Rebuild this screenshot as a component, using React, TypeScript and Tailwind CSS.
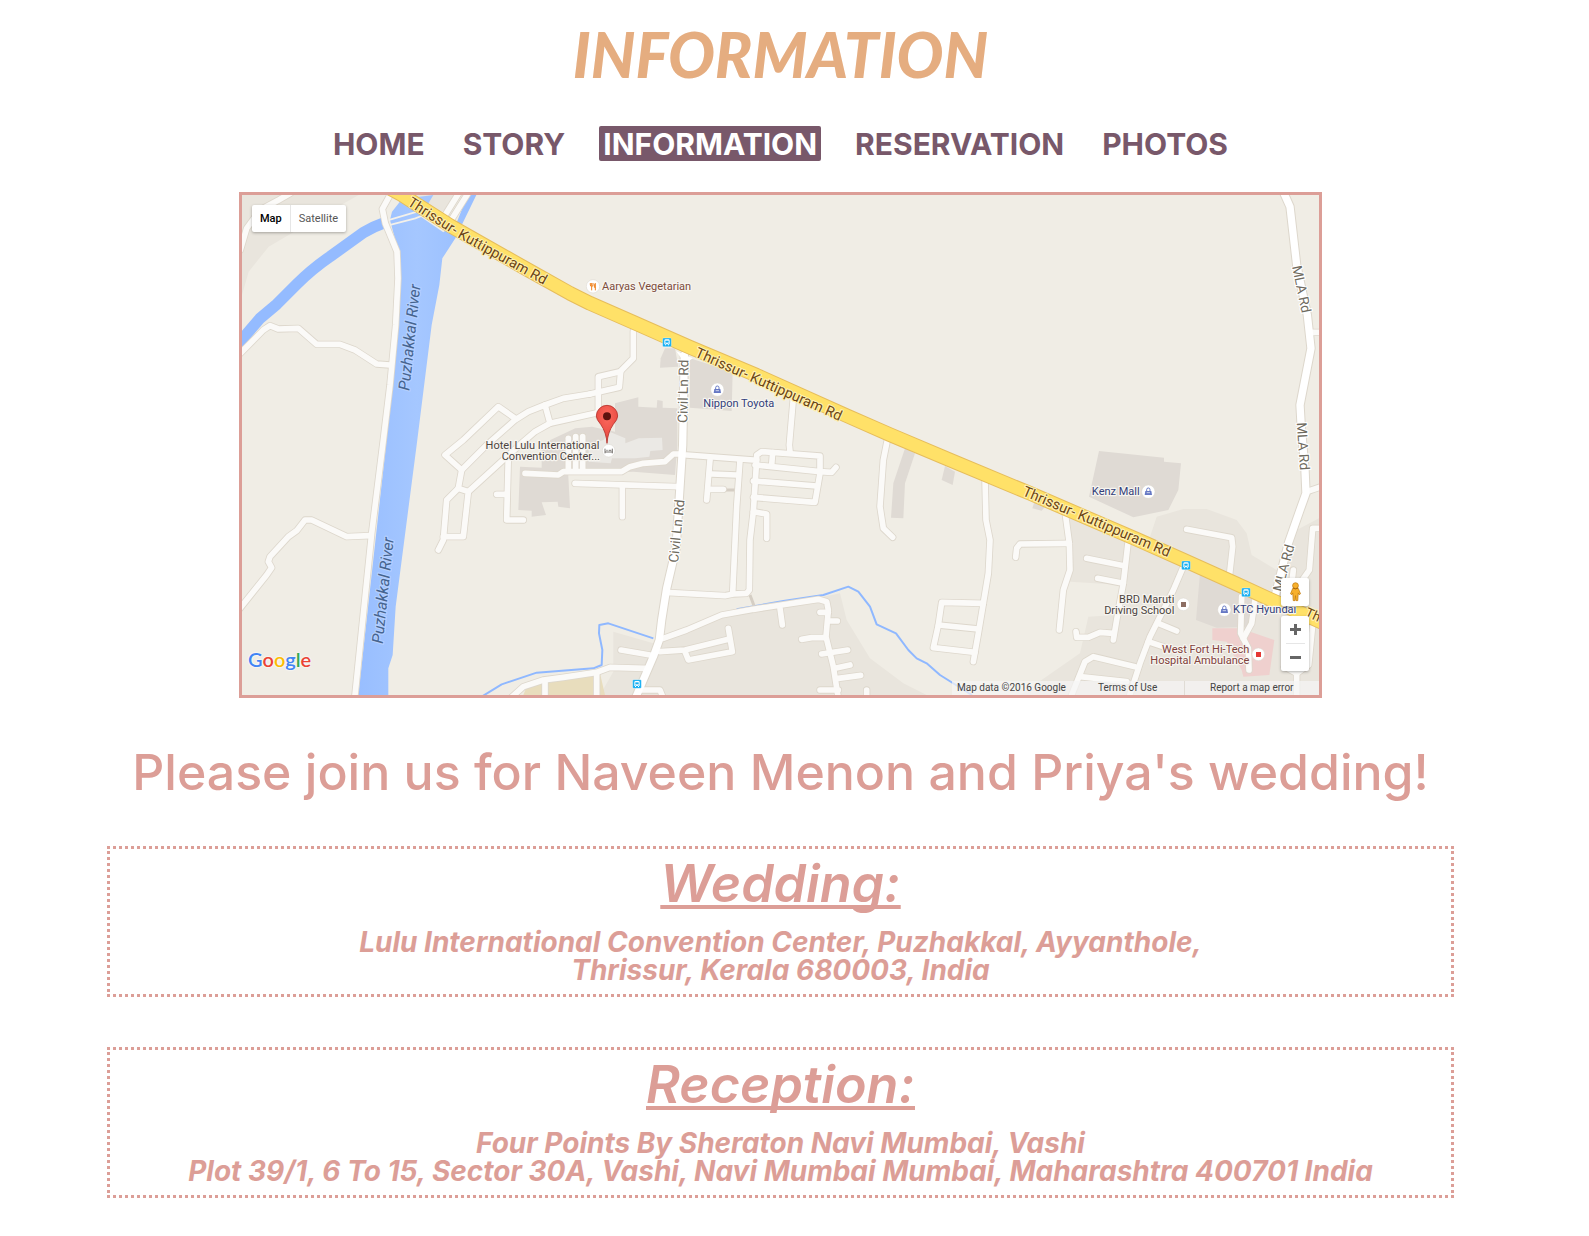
import React from 'react';

const ROADS: string[] = [
  'M-5,165 L14,100 L54,45 L110,15 L145,-5',
  'M-10,480 L64,405 L84,392 L109,402 L169,400 L224,448 L294,448 L339,465 L404,507 L444,510',
  'M-10,1245 L74,1140 L89,1118 L79,1100 L84,1085 L139,1025 L164,1007 L189,975 L209,975 L314,1025 L384,1022',
  'M447,-5 L421,42 L430,85 L465,170 L468,250 L461,390 L444,570 L424,735 L389,1015 L339,1500',
  'M600,75 L650,-5',
  'M622,84 L678,-5',
  'M819,670 L769,635 L664,735 L609,780 L659,825',
  'M1044,597 L964,610 L909,630 L859,650 L819,675 L734,750 L659,825 L649,880 L679,890 L664,1025 L604,1025',
  'M649,880 L614,915 L604,1035 L589,1065',
  'M1090,648 L924,685 L879,710 L844,740 L679,890',
  'M909,630 L924,685',
  'M1069,660 L1069,545 L1134,530 L1174,490 L1174,410',
  'M1136,530 L1132,577 L1044,597',
  'M799,780 L794,975 L844,975',
  'M764,898 L794,898',
  'M849,835 L949,840 L964,830 L1139,830 L1164,815 L1204,805 L1269,800 L1294,777 L1319,777',
  'M999,865 L1309,875',
  'M1141,875 L1141,965',
  'M979,730 V828',
  'M1001,725 V828',
  'M1022,725 V828',
  'M1334,780 L1534,795',
  'M1404,795 L1394,915',
  'M1409,837 L1484,840',
  'M1404,883 L1444,883',
  'M1494,795 L1484,935 L1472,1195',
  'M1544,795 L1544,780 L1559,770 L1734,783 L1734,835 L1719,922 L1534,907',
  'M1539,810 L1734,830 L1769,832 L1782,817',
  'M1592,773 L1589,810',
  'M1534,858 L1724,873',
  'M1544,795 L1534,950 L1524,1035 L1522,1185 L1514,1195 L1474,1197 L1449,1202 L1284,1193',
  'M1534,950 L1574,957 L1574,1030',
  'M1654,610 L1642,750 L1644,770',
  'M1936,735 L1924,795 L1914,935 L1924,1000 L1952,1027',
  'M1264,1330 L1334,1305 L1439,1260 L1534,1243 L1729,1213 L1754,1220 L1759,1245 L1752,1325 L1774,1415 L1789,1510',
  'M1614,1240 L1621,1290',
  'M1734,1252 L1759,1252',
  'M1759,1278 L1786,1278',
  'M1679,1333 L1709,1328 L1749,1328',
  'M1739,1377 L1817,1365',
  'M1779,1420 L1824,1410',
  'M1789,1450 L1856,1441',
  'M1734,1485 L1789,1485',
  'M1874,1485 L1874,1510',
  'M1137,1365 L1224,1380',
  'M1254,1370 L1329,1365 L1459,1333',
  'M1459,1300 L1471,1370 L1339,1395 L1329,1370',
  'M1209,1420 L1104,1417 L1064,1432 L964,1447 L904,1455 L844,1475 L805,1510',
  'M909,1460 V1510',
  'M1064,1435 V1510',
  'M1194,1485 L1254,1485 L1264,1510',
  'M2224,1225 L2099,1222 L2089,1290 L2074,1358 L2199,1372',
  'M2089,1290 L2209,1302',
  'M2229,850 L2232,975 L2244,1035 L2239,1135 L2224,1225 L2209,1315 L2194,1400',
  'M2469,950 L2482,1045 L2484,1125 L2464,1185 L2452,1305',
  'M2482,1045 L2334,1047 L2324,1060 L2321,1087',
  'M2659,1035 L2644,1165 L2624,1275 L2614,1335',
  'M2534,1090 L2649,1113',
  'M2567,1150 L2644,1165',
  'M2614,1315 L2574,1312 L2539,1327 L2504,1327 L2502,1310',
  'M2824,1115 L2794,1185 L2724,1325 L2694,1405 L2660,1510',
  'M2749,1285 L2804,1308',
  'M2719,1340 L2764,1355',
  'M2679,1415 L2554,1385 L2529,1400 L2485,1510',
  'M2514,1445 L2654,1460',
  'M2834,1003 L2969,1028 L2972,1055 L2962,1145',
  'M2999,1205 L2996,1315 L3019,1360 L3021,1425',
  'M3039,1215 L3029,1285 L3004,1330',
  'M3212,412 L3240,412',
  'M3194,890 L3240,874',
  'M3240,1000 L3212,1000 L3202,1125 L3174,1165',
  'M3154,1125 L3150,1160',
  'M3212,1290 L3200,1410 L3164,1435 L3127,1415',
  'M3164,1435 V1510',
];

const STREETS: string[] = [
  'M1327,480 L1322,750 L1314,875 L1302,1060 L1274,1180 L1259,1275 L1252,1335 L1234,1385 L1180,1510',
  'M3126,-5 L3144,35 L3164,210 L3196,360 L3207,460 L3174,630 L3178,700 L3189,825 L3192,895 L3174,945 L3139,1045 L3099,1205',
];

const HIGHWAY =
  'M440,-22 L474,-4 L624,92 L864,228 L984,295 L1044,325 L1174,382 L1344,457 L1544,541 L1814,662 L1944,719 L2124,795 L2364,895 L2684,1033 L2824,1095 L2984,1167 L3084,1213 L3240,1282';

const BUILDINGS: string[] = [
  '834,815 899,818 899,760 979,740 979,845 984,940 949,935 947,920 899,922 912,960 869,965 869,947 829,945',
  '1119,625 1189,607 1189,635 1244,638 1246,615 1262,618 1262,638 1306,640 1306,750 1299,840 1174,830 1044,835 900,830 914,740 1000,700 1050,695 1119,710',
  '1269,460 1299,460 1309,515 1254,518 1256,490',
  '1344,490 1472,530 1469,648 1344,638',
  '2571,768 2766,788 2766,800 2817,805 2809,885 2779,945 2674,967 2541,905',
  '1989,760 2019,775 1989,865 1984,970 1947,968 1954,865',
  '2109,813 2139,830 2132,870 2099,855',
  '2379,915 2414,930 2399,947 2371,940',
  '2874,1135 2954,1145 3044,1205 3029,1295 2924,1298 2862,1275',
];

type LabelProps = {
  x: number;
  y: number;
  rotate?: number;
  size?: number;
  fill: string;
  halo?: string;
  italic?: boolean;
  anchor?: 'start' | 'end';
  children: React.ReactNode;
};

function Label({ x, y, rotate = 0, size = 33, fill, halo = '#f7f5f0', italic, anchor = 'start', children }: LabelProps) {
  return (
    <text
      transform={`translate(${x} ${y}) rotate(${rotate})`}
      fontSize={size}
      fill={fill}
      stroke={halo}
      strokeWidth={7}
      strokeLinejoin="round"
      paintOrder="stroke"
      textAnchor={anchor}
      fontStyle={italic ? 'italic' : 'normal'}
    >
      {children}
    </text>
  );
}

function BusStop({ x, y }: { x: number; y: number }) {
  return (
    <g transform={`translate(${x} ${y})`}>
      <rect x="-13" y="-13" width="26" height="26" rx="3" fill="#12aef2" stroke="#fff" strokeWidth="1" />
      <path d="M-8,-5 Q-8,-9 -4,-9 H4 Q8,-9 8,-5 V6 H6 V9 H3 V6 H-3 V9 H-6 V6 H-8 Z" fill="#fff" />
      <rect x="-5" y="-5" width="10" height="6" fill="#12aef2" />
      <circle cx="-4" cy="4" r="1.5" fill="#12aef2" />
      <circle cx="4" cy="4" r="1.5" fill="#12aef2" />
    </g>
  );
}

function Shop({ x, y }: { x: number; y: number }) {
  return (
    <g transform={`translate(${x} ${y})`}>
      <circle r="20" fill="#fff" stroke="#d8d4cc" strokeWidth="1.5" />
      <path d="M-5,-2 V-6 Q-5,-11 0,-11 Q5,-11 5,-6 V-2" fill="none" stroke="#6678c4" strokeWidth="3" />
      <path d="M-9,-2 H9 L11,10 H-11 Z" fill="#6678c4" />
      <path d="M-5,3 H5" stroke="#fff" strokeWidth="2" />
    </g>
  );
}

function MapDrawing() {
  const road = '#fbfaf8';
  const casing = '#ddd7cc';
  const building = '#dfdad4';
  return (
    <svg
      viewBox="0 0 3231 1500"
      preserveAspectRatio="xMidYMid slice"
      className="block h-full w-full font-[Roboto,sans-serif]"
      role="img"
      aria-label="Map of Puzhakkal, Thrissur"
    >
      <defs>
        <radialGradient id="pin" cx="0.5" cy="0.3" r="0.7">
          <stop offset="0" stopColor="#fb6a5e" />
          <stop offset="1" stopColor="#e5423a" />
        </radialGradient>
        <linearGradient id="water" x1="0" x2="1">
          <stop offset="0" stopColor="#98beff" />
          <stop offset="0.5" stopColor="#a5c7ff" />
          <stop offset="1" stopColor="#98beff" />
        </linearGradient>
        <path id="highway-label" d="M494,29 L648,128 L1010,328" />
      </defs>
      <rect width="3231" height="1500" fill="#f0ede5" />
      <g fill="#e9e5dd">
        <path d="M0,0 H350 L200,85 L80,155 L20,230 L0,300 Z" />
        <path d="M480,0 H650 L600,50 L470,30 Z" />
        <path d="M1114,1310 L1234,1345 L1439,1265 L1744,1205 L1794,1195 L1814,1275 L1884,1390 L1984,1465 L2054,1500 H1074 L1114,1430 Z" />
        <path d="M2474,960 L2650,1020 L2724,1025 L2744,965 L2824,942 L2894,942 L2984,975 L3014,1015 L3029,1080 L3104,1125 L3164,1005 L3231,970 V1500 H2334 L2514,1375 L2539,1265 L2620,1260 L2644,1170 L2484,1160 Z" />
      </g>
      <path d="M844,1500 L854,1475 L1074,1435 L1089,1500 Z" fill="#e8ddbd" />
      <g fill={building}>
        {BUILDINGS.map((points) => (
          <polygon key={points} points={points} />
        ))}
      </g>
      <path
        d="M1106,712 L1150,730 L1150,745 L1190,730 L1260,728 L1262,765 L1225,768 L1222,785 L1180,790 L1110,790 L1106,805 L1040,800 L1040,750 L1084,735 Z"
        fill="#ebe9e5"
      />
      <path
        d="M2911,1300 L2994,1300 L3097,1335 L3082,1440 L3004,1445 L2999,1425 L2954,1340 L2911,1335 Z"
        fill="#efd0ce"
      />
      <path
        d="M574,0 L480,12 L450,50 L444,75 L464,150 L476,240 L469,370 L444,570 L432,750 L349,1500 H439 V1420 L452,1380 L461,1235 L524,750 L569,390 L592,270 L601,190 L640,130 L703,0 H677 L645,80 L604,112 L536,65 Z"
        fill="url(#water)"
      />
      <g fill="none" stroke="#8fb8ff" strokeLinejoin="round">
        <path
          d="M-10,445 L54,370 L104,328 L164,268 Q210,222 264,185 L364,113 Q395,94 430,82"
          strokeWidth="34"
          stroke="#94bbff"
        />
        <path
          d="M719,1505 L779,1468 L884,1433 L1054,1420 L1079,1410 L1081,1365 L1071,1315 L1072,1290 L1099,1285 L1234,1330"
          strokeWidth="6"
        />
        <path
          d="M1484,1243 L1624,1218 L1744,1200 L1819,1175 L1849,1190 L1884,1235 L1904,1288 L1962,1315 L1999,1365 L2024,1390 L2054,1405 L2094,1440 L2190,1500"
          strokeWidth="6"
        />
      </g>
      <g fill="none" stroke="#f4f1ea" strokeWidth="5">
        <path d="M424,80 L518,52 L560,45" />
        <path d="M424,95 L520,70 L540,62" />
      </g>
      <path d="M1448,885 H1478 M1524,1200 L1536,1232" stroke="#d5cec4" strokeWidth="9" />
      <g fill="none" strokeLinecap="round" strokeLinejoin="round">
        <g stroke={casing} strokeWidth="22">
          {ROADS.map((d) => (
            <path key={d} d={d} />
          ))}
        </g>
        <g stroke={casing} strokeWidth="28">
          {STREETS.map((d) => (
            <path key={d} d={d} />
          ))}
        </g>
        <g stroke={road} strokeWidth="17">
          {ROADS.map((d) => (
            <path key={d} d={d} />
          ))}
        </g>
        <g stroke="#fff" strokeWidth="22">
          {STREETS.map((d) => (
            <path key={d} d={d} />
          ))}
        </g>
        <path d="M1302,468 L1352,490 L1330,506 Z" fill="#fff" />
        <path d={HIGHWAY} stroke="#e6bd5c" strokeWidth="44" />
        <path d={HIGHWAY} stroke="#ffe168" strokeWidth="38" />
      </g>

      <text
        fontSize="43"
        fill="#6b4413"
        stroke="#fff0b0"
        strokeWidth="6"
        strokeLinejoin="round"
        paintOrder="stroke"
      >
        <textPath href="#highway-label">Thrissur- Kuttippuram Rd</textPath>
      </text>
      <Label x={1357} y={484} rotate={24} size={43} fill="#6b4413" halo="#fff0b0">Thrissur- Kuttippuram Rd</Label>
      <Label x={2339} y={900} rotate={23} size={43} fill="#6b4413" halo="#fff0b0">Thrissur- Kuttippuram Rd</Label>
      <Label x={3187} y={1262} rotate={24} size={40} fill="#6b4413" halo="#fff0b0">Th</Label>
      <Label x={502} y={588} rotate={-84} size={47} fill="#46648f" halo="#b4d0ff" italic>Puzhakkal River</Label>
      <Label x={422} y={1347} rotate={-84} size={47} fill="#46648f" halo="#b4d0ff" italic>Puzhakkal River</Label>
      <Label x={1336} y={684} rotate={-89} size={41} fill="#6f6b60" halo="#fff">Civil Ln Rd</Label>
      <Label x={1308} y={1104} rotate={-84} size={41} fill="#6f6b60" halo="#fff">Civil Ln Rd</Label>
      <Label x={3150} y={215} rotate={78} size={41} fill="#6f6b60" halo="#fff">MLA Rd</Label>
      <Label x={3164} y={683} rotate={86} size={41} fill="#6f6b60" halo="#fff">MLA Rd</Label>
      <Label x={3120} y={1192} rotate={-75} size={41} fill="#6f6b60" halo="#fff">MLA Rd</Label>

      <circle cx="1053" cy="274" r="20" fill="#fff" stroke="#d8d4cc" strokeWidth="1.5" />
      <path
        d="M1045,264 V270 Q1045,274 1049,275 V286 M1049,264 V275 M1053,264 V270 Q1053,274 1049,275 M1060,286 V265 Q1056,267 1057,277 H1060"
        fill="none"
        stroke="#f0821e"
        strokeWidth="3"
      />
      <Label x={1080} y={285} fill="#7d4c3c">Aaryas Vegetarian</Label>
      <Shop x={1426} y={584} />
      <Label x={1384} y={636} fill="#33407a">Nippon Toyota</Label>
      <Shop x={2719} y={890} />
      <Label x={2693} y={899} fill="#33407a" anchor="end">Kenz Mall</Label>
      <Shop x={2947} y={1244} />
      <Label x={2973} y={1255} fill="#33407a">KTC Hyundai</Label>
      <BusStop x={1275} y={442} />
      <BusStop x={1185} y={1467} />
      <BusStop x={2832} y={1111} />
      <BusStop x={3012} y={1192} />

      <circle cx="2824" cy="1228" r="19" fill="#fff" stroke="#d8d4cc" strokeWidth="1.5" />
      <rect x="2817" y="1221" width="15" height="15" fill="#8d6e63" />
      <Label x={2797} y={1224} fill="#4c4440" anchor="end">BRD Maruti</Label>
      <Label x={2797} y={1257} fill="#4c4440" anchor="end">Driving School</Label>
      <circle cx="3049" cy="1378" r="19" fill="#fff" stroke="#d8d4cc" strokeWidth="1.5" />
      <rect x="3042" y="1371" width="15" height="15" fill="#e53935" />
      <Label x={3022} y={1374} fill="#81413c" anchor="end">West Fort Hi-Tech</Label>
      <Label x={3022} y={1407} fill="#81413c" anchor="end">Hospital Ambulance</Label>

      <circle cx="1100" cy="767" r="19" fill="#fff" stroke="#d8d4cc" strokeWidth="1.5" />
      <path d="M1089,761 V775 M1111,761 V775 M1089,771 H1111 M1093,766 H1097 M1100,766 H1108" stroke="#5f5a55" strokeWidth="2.5" />
      <Label x={1072} y={761} fill="#4c4440" anchor="end">Hotel Lulu International</Label>
      <Label x={1074} y={794} fill="#4c4440" anchor="end">Convention Center...</Label>
      <path
        d="M1095,745 Q1093,712 1076,688 Q1063,673 1063,663 A32,32 0 0 1 1127,663 Q1127,673 1114,688 Q1097,712 1095,745 Z"
        fill="url(#pin)"
        stroke="#b5312b"
        strokeWidth="2.5"
      />
      <circle cx="1095" cy="664" r="12" fill="#5c120e" />
    </svg>
  );
}

function Pegman() {
  return (
    <svg viewBox="0 0 14 22" className="h-[20px] w-[13px]" aria-hidden="true">
      <path d="M4,7 H10 L12.5,13 L11,14 L10,12 L9.5,20.5 H7.5 L7,15 L6.5,20.5 H4.5 L4,12 L3,14 L1.5,13 Z" fill="#f7b02c" stroke="#c07a12" strokeWidth="0.8" />
      <circle cx="7" cy="4" r="3.2" fill="#f7b02c" stroke="#c07a12" strokeWidth="0.8" />
      <path d="M4.2,6.6 Q7,8.6 9.8,6.6" fill="none" stroke="#a86208" strokeWidth="1" />
    </svg>
  );
}

function MapPanel() {
  return (
    <section className="relative mx-auto h-[506px] w-full max-w-[1083px] overflow-hidden border-3 border-[#dc9e97] font-[Roboto,sans-serif]">
      <MapDrawing />
      <div className="absolute top-[10px] left-[10px] flex h-[27px] rounded-xs bg-white text-[11px] shadow-[0_1px_3px_rgba(0,0,0,0.3)]">
        <button type="button" className="border-r border-[#e6e6e6] px-2 pt-px font-medium text-black">Map</button>
        <button type="button" className="px-2 pt-px text-[#565656]">Satellite</button>
      </div>
      <button
        type="button"
        aria-label="Street View"
        className="absolute top-[383px] right-[10px] flex size-7 items-center justify-center rounded-xs bg-white shadow-[0_1px_3px_rgba(0,0,0,0.3)]"
      >
        <Pegman />
      </button>
      <div className="absolute top-[421px] right-[10px] flex w-7 flex-col items-center rounded-xs bg-white shadow-[0_1px_3px_rgba(0,0,0,0.3)]">
        <button type="button" aria-label="Zoom in" className="flex h-[27px] w-full items-center justify-center">
          <svg viewBox="0 0 11 11" className="size-[11px]"><path d="M0,5.5 H11 M5.5,0 V11" stroke="#666" strokeWidth="3" /></svg>
        </button>
        <span className="h-px w-[19px] bg-[#e6e6e6]" />
        <button type="button" aria-label="Zoom out" className="flex h-[27px] w-full items-center justify-center">
          <svg viewBox="0 0 11 11" className="size-[11px]"><path d="M0,5.5 H11" stroke="#666" strokeWidth="3" /></svg>
        </button>
      </div>
      <a
        href="#google"
        className="absolute bottom-[22px] left-[6px] font-[Lato,sans-serif] text-[20px] leading-7 font-semibold [text-shadow:0_0_2px_#fff,0_0_2px_#fff]"
      >
        <span className="text-[#4285f4]">G</span>
        <span className="text-[#ea4335]">o</span>
        <span className="text-[#fbbc05]">o</span>
        <span className="text-[#4285f4]">g</span>
        <span className="text-[#34a853]">l</span>
        <span className="text-[#ea4335]">e</span>
      </a>
      <div className="absolute right-0 bottom-0 flex h-[14px] bg-[#f5f5f5]/70 text-[10px] leading-[14px] text-[#444]">
        <span className="w-[127px] pl-[5px] whitespace-nowrap">Map data ©2016 Google</span>
        <a href="#terms" className="w-[106px] border-r border-[#e0dcd5] pl-[19px]">Terms of Use</a>
        <a href="#report" className="w-[134px] pl-[25px]">Report a map error</a>
      </div>
    </section>
  );
}

const NAV = ['HOME', 'STORY', 'INFORMATION', 'RESERVATION', 'PHOTOS'];

function EventCard({ title, lines }: { title: string; lines: string[] }) {
  return (
    <section className="border-3 border-dotted border-[#dc9e97] px-4 pt-1 pb-[10px] text-center italic">
      <h3 className="text-[52px] leading-[62px] font-semibold underline decoration-4 underline-offset-[3px] [text-decoration-skip-ink:none]">
        {title}
      </h3>
      <p className="pt-[13px] text-[28px] leading-7 font-bold">
        {lines.map((line) => (
          <span key={line} className="block">{line}</span>
        ))}
      </p>
    </section>
  );
}

export default function App() {
  return (
    <div className="min-h-screen bg-white pr-7 font-[Inter,sans-serif] text-[#dc9e97]">
      <header className="flex flex-col items-center pt-3">
        <h1 className="font-[Lato,sans-serif] text-[62px] leading-[84px] font-black text-[#e5ad80] italic">INFORMATION</h1>
        <nav className="mt-[30px] flex flex-wrap justify-center gap-[30px] text-[30px] leading-[33px] font-bold text-[#78586a]">
          {NAV.map((item) => (
            <a
              key={item}
              href={`#${item.toLowerCase()}`}
              className={item === 'INFORMATION' ? 'rounded-xs bg-[#78586a] px-1 pt-[2px] text-white' : 'px-1 pt-[2px]'}
            >
              {item}
            </a>
          ))}
        </nav>
      </header>
      <main className="mx-auto mt-[31px] w-full max-w-[1347px] pb-9">
        <MapPanel />
        <h2 className="mt-[44px] text-center text-[50px] leading-[60px] font-medium">
          Please join us for Naveen Menon and Priya's wedding!
        </h2>
        <div className="mt-[44px] flex flex-col gap-[50px]">
          <EventCard
            title="Wedding:"
            lines={['Lulu International Convention Center, Puzhakkal, Ayyanthole,', 'Thrissur, Kerala 680003, India']}
          />
          <EventCard
            title="Reception:"
            lines={[
              'Four Points By Sheraton Navi Mumbai, Vashi',
              'Plot 39/1, 6 To 15, Sector 30A, Vashi, Navi Mumbai Mumbai, Maharashtra 400701 India',
            ]}
          />
        </div>
      </main>
    </div>
  );
}
